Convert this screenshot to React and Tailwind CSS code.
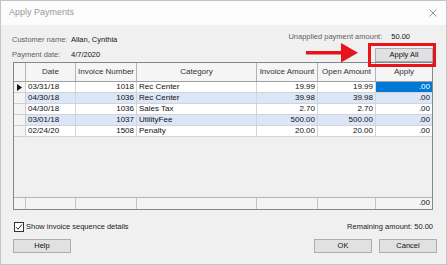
import React from 'react';

const rows = [
  ['03/31/18', '1018', 'Rec Center', '19.99', '19.99'],
  ['04/30/18', '1036', 'Rec Center', '39.98', '39.98'],
  ['04/30/18', '1036', 'Sales Tax', '2.70', '2.70'],
  ['03/01/18', '1037', 'UtilityFee', '500.00', '500.00'],
  ['02/24/20', '1508', 'Penalty', '20.00', '20.00'],
];

const cols = 'grid grid-cols-[12px_50px_61px_120px_61px_58px_56px]';
const btn = 'h-[14px] w-[58px] bg-[#e1e1e1] border border-[#adadad] text-[7.5px] leading-[12px] text-[#111] text-center';

export default function App() {
  return (
    <div className="relative w-[447px] h-[265px] border border-[#c4c4c4] bg-[#f0f0f0] font-['Liberation_Sans',Arial,sans-serif] overflow-hidden flex flex-col">
      {/* Title bar */}
      <div className="h-[24px] bg-[#fcfcfc] flex items-center justify-between pl-[8px] pr-[9px]">
        <span className="text-[9px] text-[#9a9a9a]">Apply Payments</span>
        <svg width="8" height="8" viewBox="0 0 8 8">
          <path d="M0.5 0.5L7.5 7.5M7.5 0.5L0.5 7.5" stroke="#8a8a8a" strokeWidth="0.9" />
        </svg>
      </div>

      {/* Top info */}
      <div className="flex h-[37px]">
        <div className="pl-[11px] pt-[8px] grid grid-cols-[59px_auto] text-[7.5px] leading-[14px]">
          <span className="text-[#5f5f5f]">Customer name:</span>
          <span className="text-[#151515]">Allan, Cynthia</span>
          <span className="text-[#5f5f5f]">Payment date:</span>
          <span className="text-[#151515]">4/7/2020</span>
        </div>
        <div className="ml-auto flex flex-col items-end pr-[13px]">
          <div className="mt-[7px] h-[10px] leading-[10px] text-[7.5px] mr-[23px] text-[#5f5f5f]">
            Unapplied payment amount:<span className="ml-[9px] text-[#151515]">50.00</span>
          </div>
          <button className={`${btn} mt-[6px] h-[13px] leading-[11px]`}>Apply All</button>
        </div>
      </div>

      {/* Grid */}
      <div className="ml-[12px] w-[420px] h-[148px] border border-[#828790] bg-[#f0f0f0] flex flex-col text-[8px] leading-[10px] text-[#111]">
        <div className={`${cols} h-[19px] bg-[#f5f5f5] border-b border-[#a0a0a0] text-[#333]`}>
          {['', 'Date', 'Invoice Number', 'Category', 'Invoice Amount', 'Open Amount', 'Apply'].map((h, i) => (
            <div key={i} className={`flex items-center justify-center ${i < 6 ? 'border-r border-[#b4b4b4]' : ''}`}>{h}</div>
          ))}
        </div>
        {rows.map((r, ri) => {
          const bg = ri % 2 === 1 ? 'bg-[#dbe6f8]' : 'bg-white';
          return (
            <div key={ri} className={`${cols} h-[11px]`}>
              <div className="bg-[#f4f4f4] border-r border-b border-[#cfcfcf] flex items-center pl-[3px]">
                {ri === 0 && (
                  <svg width="5" height="7" viewBox="0 0 5 7"><path d="M0 0L5 3.5L0 7Z" fill="#111" /></svg>
                )}
              </div>
              <div className={`${bg} border-r border-b border-[#d4d4d4] pl-[2px]`}>{r[0]}</div>
              <div className={`${bg} border-r border-b border-[#d4d4d4] pr-[2px] text-right`}>{r[1]}</div>
              <div className={`${bg} border-r border-b border-[#d4d4d4] pl-[2px]`}>{r[2]}</div>
              <div className={`${bg} border-r border-b border-[#d4d4d4] pr-[2px] text-right`}>{r[3]}</div>
              <div className={`${bg} border-r border-b border-[#d4d4d4] pr-[2px] text-right`}>{r[4]}</div>
              <div className={`${ri === 0 ? 'bg-[#0078d7] text-white' : bg} border-b border-[#d4d4d4] pr-[2px] text-right`}>.00</div>
            </div>
          );
        })}
        <div className="flex-1" />
        <div className={`${cols} h-[12px] border-t border-[#b4b4b4]`}>
          {[0, 1, 2, 3, 4, 5, 6].map((i) => (
            <div key={i} className={`bg-[#f4f4f4] pr-[2px] text-right ${i < 6 ? 'border-r border-[#c4c4c4]' : ''}`}>{i === 6 ? '.00' : ''}</div>
          ))}
        </div>
      </div>

      {/* Checkbox and remaining */}
      <div className="mt-[11px] h-[11px] flex items-center pl-[13px] pr-[13px] text-[7.5px]">
        <div className="w-[10px] h-[10px] border border-[#333] bg-white flex items-center justify-center">
          <svg width="8" height="8" viewBox="0 0 8 8">
            <path d="M1 4.2L3 6.2L7 1.5" stroke="#222" strokeWidth="1" fill="none" />
          </svg>
        </div>
        <span className="ml-[2px] text-[#222]">Show invoice sequence details</span>
        <span className="ml-auto text-[#222]">Remaining amount: 50.00</span>
      </div>

      {/* Buttons */}
      <div className="mt-[7px] flex pl-[12px] pr-[9px]">
        <button className={btn}>Help</button>
        <button className={`${btn} ml-auto`}>OK</button>
        <button className={`${btn} ml-[7px]`}>Cancel</button>
      </div>

      {/* Annotations */}
      <div className="absolute left-[367px] top-[42px] w-[68px] h-[24px] border-[3px] border-[#e8141c]" />
      <svg className="absolute left-[305px] top-[42px]" width="52" height="20" viewBox="0 0 52 20">
        <path d="M0 9.8H37" stroke="#e8141c" strokeWidth="3.5" />
        <path d="M35 0L52 9.8L35 19.5Z" fill="#e8141c" />
      </svg>
    </div>
  );
}
